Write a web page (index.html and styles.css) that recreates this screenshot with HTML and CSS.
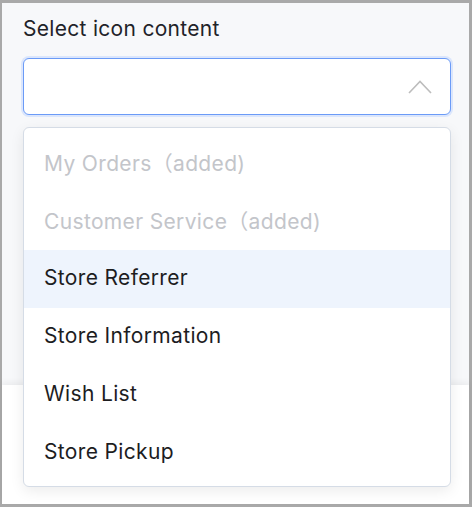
FILE: index.html
```html
<!DOCTYPE html>
<html>
<head>
<meta charset="utf-8">
<link rel="stylesheet" href="styles.css">
</head>
<body>
<div class="frame">
  <div class="main">
    <div class="label">Select icon content</div>
    <div class="select">
      <svg class="chev" width="24" height="14" viewBox="0 0 24 14"><polyline points="1,13 12,1.5 23,13" fill="none" stroke="#bdbdbd" stroke-width="1.6"/></svg>
    </div>
  </div>
  <div class="footer"></div>
  <ul class="menu">
    <li class="item disabled">My Orders（added)</li>
    <li class="item disabled">Customer Service（added)</li>
    <li class="item active">Store Referrer</li>
    <li class="item">Store Information</li>
    <li class="item">Wish List</li>
    <li class="item">Store Pickup</li>
  </ul>
</div>
</body>
</html>
```
FILE: styles.css
```css
html, body { margin: 0; padding: 0; }
body {
  background: #a9a9a9;
  font-family: Inter, "Noto Sans CJK SC", sans-serif;
  width: 472px;
  height: 507px;
  overflow: hidden;
}
.frame {
  position: relative;
  margin: 3px 3px 0 2px;
  height: 501px;
  background: #f7f8fa;
  display: flex;
  flex-direction: column;
}
.main {
  height: 382px;
  padding: 14px 18px 0 21px;
  box-sizing: border-box;
}
.label {
  font-size: 21px;
  line-height: 24px;
  letter-spacing: 0.3px;
  color: #1f2329;
}
.select {
  margin-top: 17px;
  height: 57px;
  box-sizing: border-box;
  border: 1px solid #6b9bf7;
  border-radius: 6px;
  background: #fff;
  box-shadow: 0 0 0 2px #dbe6fc;
  display: flex;
  align-items: center;
  justify-content: flex-end;
  padding-right: 18px;
}
.chev { display: block; }
.footer {
  flex: 1;
  background: #fff;
  box-shadow: 0 -3px 6px rgba(0,0,0,0.05);
}
.menu {
  position: absolute;
  left: 21px;
  top: 124px;
  width: 428px;
  height: 360px;
  box-sizing: border-box;
  margin: 0;
  padding: 6px 0;
  list-style: none;
  background: #fff;
  border: 1px solid #d5dce6;
  border-radius: 6px;
  box-shadow: 0 4px 14px rgba(0,0,0,0.08);
}
.item {
  height: 58px;
  box-sizing: border-box;
  display: flex;
  align-items: center;
  padding: 0 0 3px 20px;
  font-size: 21px;
  letter-spacing: 0.35px;
  color: #1d1d1f;
}
.item.disabled { color: #c3c5ca; }
.item.active { background: #eef4fd; }
```
